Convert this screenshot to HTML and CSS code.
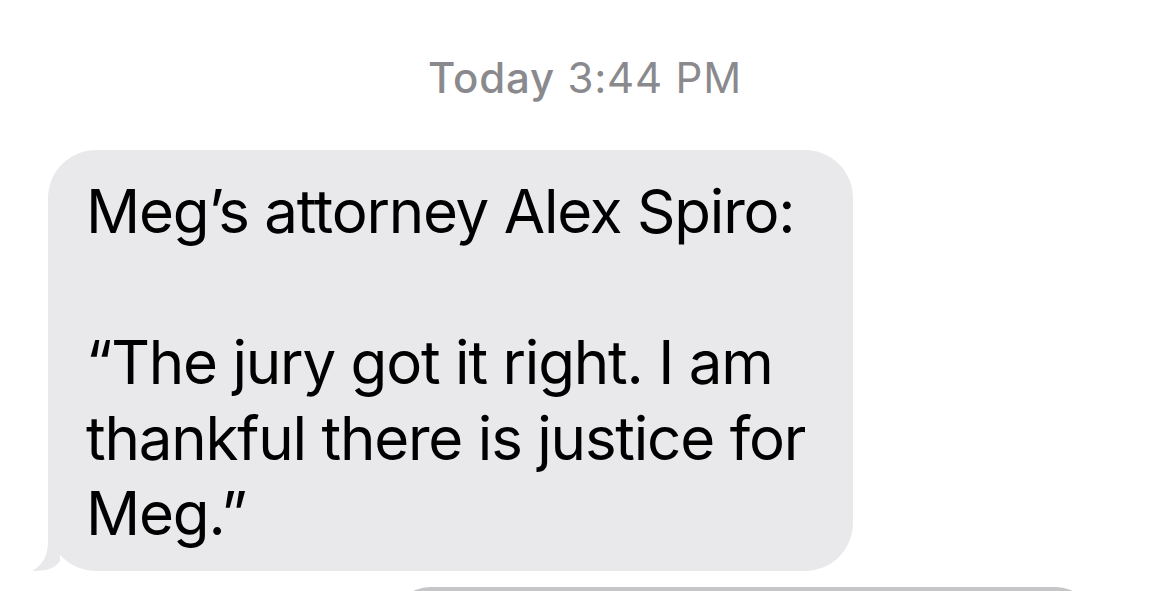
FILE: index.html
```html
<!DOCTYPE html>
<html>
<head>
<meta charset="utf-8">
<link rel="stylesheet" href="styles.css">
</head>
<body>
<div class="thread">
  <div class="stamp"><span class="stamp-day">Today</span> 3:44 PM</div>
  <div class="row">
    <div class="bubble">
      <p class="line">Meg’s attorney Alex Spiro:</p>
      <p class="line blank">&nbsp;</p>
      <p class="line">“The jury got it right. I am</p>
      <p class="line">thankful there is justice for</p>
      <p class="line">Meg.”</p>
      <svg class="tail" width="30" height="44" viewBox="0 0 30 44"><path d="M18 0 L30 0 L30 34 C26 40 20 44 2 44 C12 38 18 30 18 14 Z" fill="#e9e9eb"/></svg>
    </div>
  </div>
  <div class="row-out">
    <div class="bubble-out"></div>
  </div>
</div>
</body>
</html>
```
FILE: styles.css
```css
html, body {
  margin: 0;
  padding: 0;
  background: #ffffff;
  overflow: hidden;
}
.thread {
  width: 1170px;
  height: 591px;
  overflow: hidden;
  font-family: Inter, "Liberation Sans", sans-serif;
}
.stamp {
  text-align: center;
  color: #8a8a8e;
  font-size: 42px;
  line-height: 48px;
  padding-top: 54px;
  letter-spacing: 0.8px;
}
.stamp-day {
  font-weight: 500;
}
.row {
  padding-left: 48px;
  margin-top: 48px;
}
.bubble {
  position: relative;
  width: 805px;
  box-sizing: border-box;
  background: #e9e9eb;
  border-radius: 48px;
  padding: 24px 0 19px 38px;
  color: #000000;
}
.line {
  margin: 0;
  font-size: 60px;
  line-height: 75.5px;
  white-space: nowrap;
  letter-spacing: -1.2px;
}
.tail {
  position: absolute;
  left: -18px;
  bottom: 0;
  display: block;
}
.row-out {
  margin-top: 16px;
  padding-left: 394px;
}
.bubble-out {
  width: 698px;
  height: 60px;
  background: #c6c6c8;
  border-radius: 36px 36px 0 0;
}
```
